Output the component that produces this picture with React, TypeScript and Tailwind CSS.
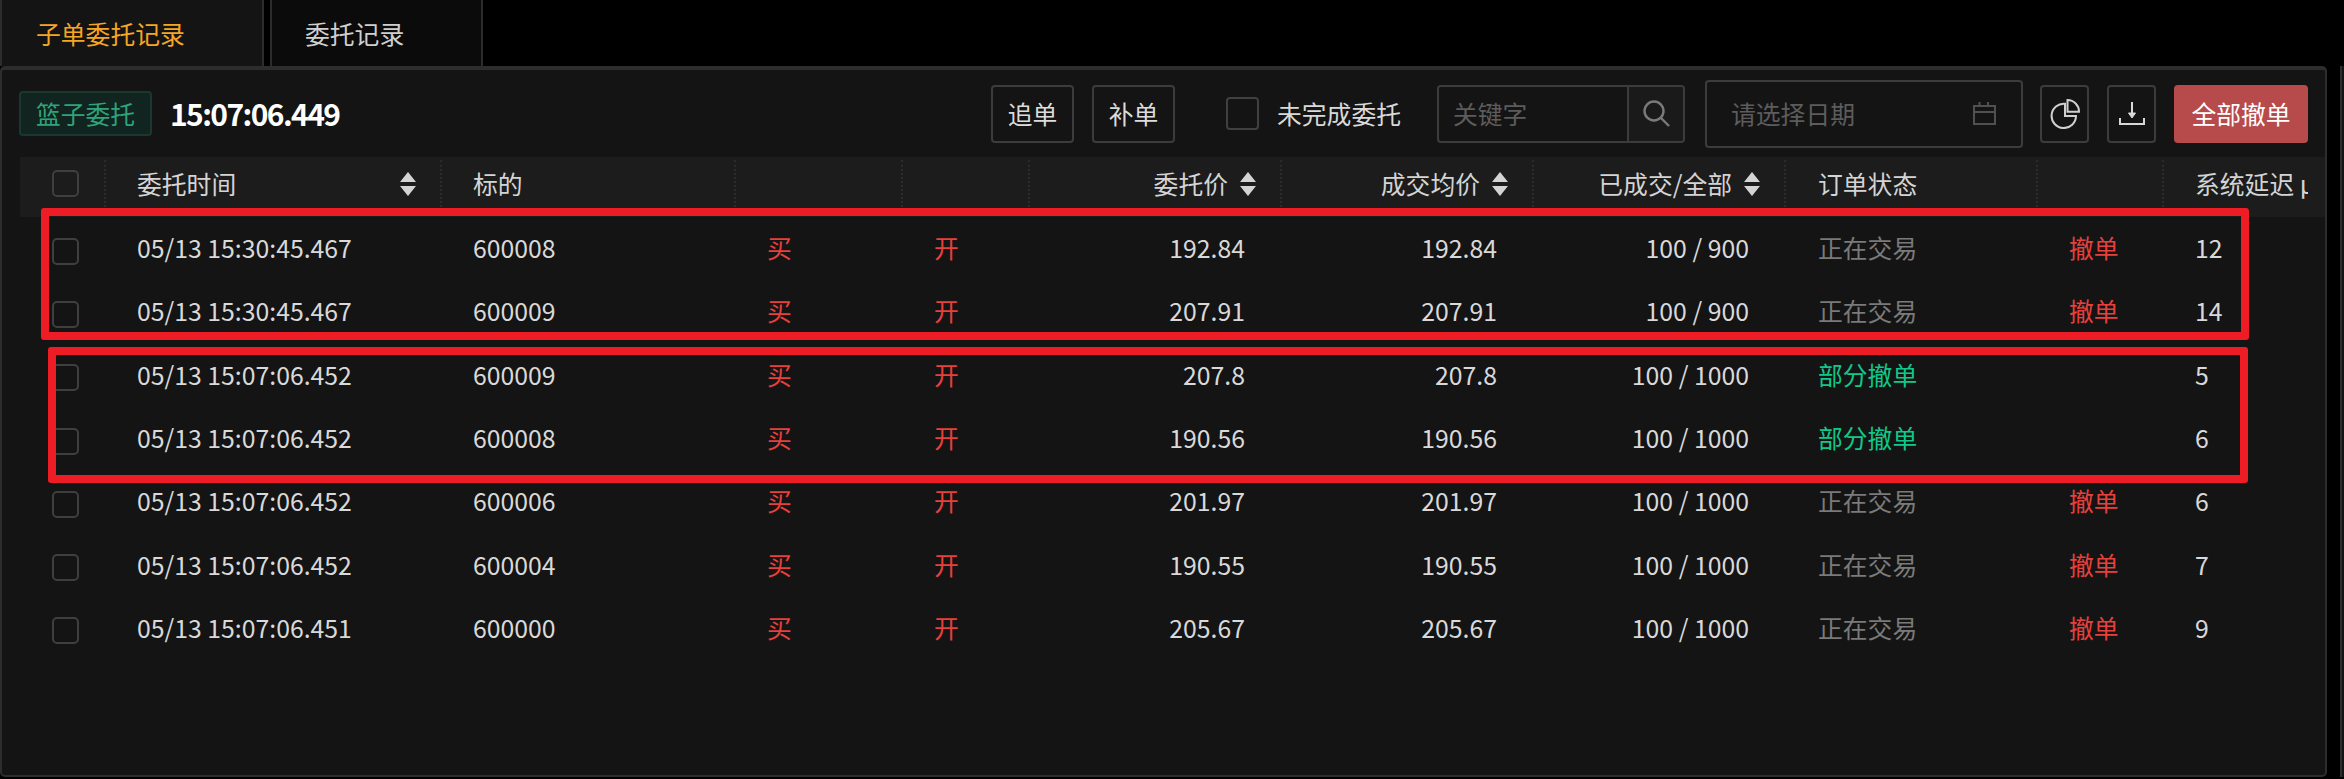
import React from "react";

const gridCols =
  "grid grid-cols-[84px_336px_294px_167px_127px_252px_252px_252px_252px_126px_146px]";

const rows = [
  { time: "05/13 15:30:45.467", code: "600008", price: "192.84", fill: "100 / 900", status: "正在交易", lag: "12" },
  { time: "05/13 15:30:45.467", code: "600009", price: "207.91", fill: "100 / 900", status: "正在交易", lag: "14" },
  { time: "05/13 15:07:06.452", code: "600009", price: "207.8", fill: "100 / 1000", status: "部分撤单", lag: "5" },
  { time: "05/13 15:07:06.452", code: "600008", price: "190.56", fill: "100 / 1000", status: "部分撤单", lag: "6" },
  { time: "05/13 15:07:06.452", code: "600006", price: "201.97", fill: "100 / 1000", status: "正在交易", lag: "6" },
  { time: "05/13 15:07:06.452", code: "600004", price: "190.55", fill: "100 / 1000", status: "正在交易", lag: "7" },
  { time: "05/13 15:07:06.451", code: "600000", price: "205.67", fill: "100 / 1000", status: "正在交易", lag: "9" },
];

function Checkbox({ className }: { className?: string }) {
  return (
    <span className={`block w-[27px] h-[27px] ml-[32px] rounded-[5px] border-2 border-[#3f3f3f] ${className ?? ""}`} />
  );
}

function SortIcon() {
  return (
    <svg width="16" height="24" viewBox="0 0 16 24" className="shrink-0">
      <path d="M8 0 L16 10 L0 10 Z" fill="#d4d4d4" />
      <path d="M0 14 L16 14 L8 24 Z" fill="#d4d4d4" />
    </svg>
  );
}

function HeadCell({ children, first }: { children?: React.ReactNode; first?: boolean }) {
  return (
    <div className={`h-[47px] flex items-center ${first ? "" : "border-l-2 border-dotted border-[#2b2b2b]"}`}>
      {children}
    </div>
  );
}

function SortHead({ label }: { label: string }) {
  return (
    <HeadCell>
      <div className="flex-1 flex items-center justify-end gap-[12px] pr-[24px]">
        <span>{label}</span>
        <SortIcon />
      </div>
    </HeadCell>
  );
}

function ToolButton({ children, className }: { children: React.ReactNode; className?: string }) {
  return (
    <button
      className={`h-[58px] flex items-center justify-center rounded-[4px] border-2 border-[#3c3c3c] text-[#dcdcdc] ${className ?? ""}`}
    >
      {children}
    </button>
  );
}

export default function App() {
  return (
    <div className="relative w-[2344px] h-[779px] bg-black overflow-hidden font-['Noto_Sans_CJK_SC','Liberation_Sans',sans-serif] text-[24.8px] text-[#d9d9d9]">
      {/* tabs */}
      <div className="flex h-[66px]">
        <div className="w-[264px] bg-[#141414] border-x-2 border-[#2c2c2c] pl-[34px] flex items-center text-[#f5a623] leading-none">
          子单委托记录
        </div>
        <div className="ml-[6px] w-[213px] bg-[#0b0b0b] border-x-2 border-[#2c2c2c] pl-[33px] flex items-center text-[#cfcfcf] leading-none">
          委托记录
        </div>
      </div>

      <div className="flex">
        {/* panel */}
        <div className="w-[2327px] h-[711px] shrink-0 bg-[#141414] border-t-4 border-x-2 border-b-2 border-[#2d2d2d] rounded-[5px]">
          {/* toolbar */}
          <div className="h-[87px] flex items-center pl-[17px] pr-[17px]">
            <span className="w-[133px] h-[45px] flex items-center justify-center rounded-[4px] bg-[#12241f] border-2 border-[#17392f] text-[#2fa37c]">
              篮子委托
            </span>
            <span className="ml-[18px] text-[30px] font-bold tracking-[-1.6px] text-white">15:07:06.449</span>
            <div className="flex-1" />
            <ToolButton className="w-[83px]">追单</ToolButton>
            <ToolButton className="w-[83px] ml-[18px]">补单</ToolButton>
            <span className="ml-[51px] block w-[33px] h-[33px] rounded-[4px] border-2 border-[#404040]" />
            <span className="ml-[18px] w-[125px] whitespace-nowrap">未完成委托</span>
            <div className="ml-[35px] w-[248px] h-[58px] flex rounded-[4px] border-2 border-[#3c3c3c]">
              <span className="w-[190px] pl-[14px] flex items-center text-[#5c5c5c] border-r-2 border-[#3c3c3c]">关键字</span>
              <span className="flex-1 flex items-center justify-center bg-[#1a1a1a] rounded-r-[3px]">
                <svg width="27" height="27" viewBox="0 0 27 27" fill="none" stroke="#7a7a7a" strokeWidth="2.4">
                  <circle cx="11" cy="11" r="9.5" />
                  <path d="M18 18 L26 26" />
                </svg>
              </span>
            </div>
            <div className="ml-[20px] w-[318px] h-[68px] flex items-center justify-between pl-[24px] pr-[25px] rounded-[4px] border-2 border-[#3c3c3c] text-[#5c5c5c]">
              <span>请选择日期</span>
              <svg width="23" height="23" viewBox="0 0 23 23" fill="none" stroke="#505050" strokeWidth="2">
                <path d="M1 4 H22 V22 H1 Z" />
                <path d="M1 10 H22" />
                <path d="M6.5 0 V4 M15 0 V4" />
              </svg>
            </div>
            <ToolButton className="ml-[17px] w-[49px]">
              <svg width="30" height="30" viewBox="0 0 30 30" fill="none" stroke="#d0d0d0" strokeWidth="2">
                <path d="M15 4.7 A12.2 12.2 0 1 0 26 17 H15 Z" />
                <path d="M17.5 1 A11.6 11.6 0 0 1 29 12.7 H17.5 Z" />
              </svg>
            </ToolButton>
            <ToolButton className="ml-[18px] w-[49px]">
              <svg width="26" height="23" viewBox="0 0 26 23" fill="none" stroke="#d8d8d8" strokeWidth="2">
                <path d="M13 0 V12" />
                <path d="M9.5 11 H16.5 L13 16 Z" fill="#d8d8d8" strokeWidth="1" />
                <path d="M1 16 V22 H25 V16" />
              </svg>
            </ToolButton>
            <button className="ml-[18px] w-[134px] h-[58px] rounded-[4px] bg-[#b74b4b] text-white">全部撤单</button>
          </div>

          {/* table head */}
          <div className={`${gridCols} ml-[18px] h-[60px] bg-[#1c1c1c] items-start pt-[3px] text-[#d4d4d4]`}>
            <HeadCell first>
              <Checkbox />
            </HeadCell>
            <HeadCell>
              <div className="flex-1 flex items-center justify-between pl-[31px] pr-[24px]">
                <span>委托时间</span>
                <SortIcon />
              </div>
            </HeadCell>
            <HeadCell>
              <span className="pl-[31px]">标的</span>
            </HeadCell>
            <HeadCell />
            <HeadCell />
            <SortHead label="委托价" />
            <SortHead label="成交均价" />
            <SortHead label="已成交/全部" />
            <HeadCell>
              <span className="pl-[32px]">订单状态</span>
            </HeadCell>
            <HeadCell />
            <HeadCell>
              <span className="pl-[31px] whitespace-nowrap overflow-hidden">系统延迟 μs</span>
            </HeadCell>
          </div>

          {/* rows */}
          {rows.map((r, i) => (
            <div key={i} className={`${gridCols} ml-[18px] h-[63.3px] pb-[2px] items-center`}>
              <Checkbox className="mt-[7px]" />
              <span className="pl-[33px]">{r.time}</span>
              <span className="pl-[33px]">{r.code}</span>
              <span className="pl-[33px] text-[#e8403c]">买</span>
              <span className="pl-[33px] text-[#e8403c]">开</span>
              <span className="pr-[35px] text-right">{r.price}</span>
              <span className="pr-[35px] text-right">{r.price}</span>
              <span className="pr-[35px] text-right">{r.fill}</span>
              <span className={`pl-[34px] ${r.status === "部分撤单" ? "text-[#10c88a]" : "text-[#7a7a7a]"}`}>{r.status}</span>
              <span className="pl-[33px] text-[#e8403c]">{r.status === "正在交易" ? "撤单" : ""}</span>
              <span className="pl-[33px]">{r.lag}</span>
            </div>
          ))}
        </div>

        {/* edge of the neighbouring panel */}
        <div className="ml-[13px] w-[4px] h-[711px] shrink-0 bg-[#141414] border-l-2 border-[#2d2d2d]" />
      </div>

      {/* red annotation boxes drawn over the table */}
      <div className="absolute left-[41px] top-[208px] w-[2208px] h-[132px] border-[8px] border-[#ee1c25] rounded-[3px]" />
      <div className="absolute left-[48px] top-[347px] w-[2200px] h-[136px] border-[8px] border-[#ee1c25] rounded-[3px]" />
    </div>
  );
}
